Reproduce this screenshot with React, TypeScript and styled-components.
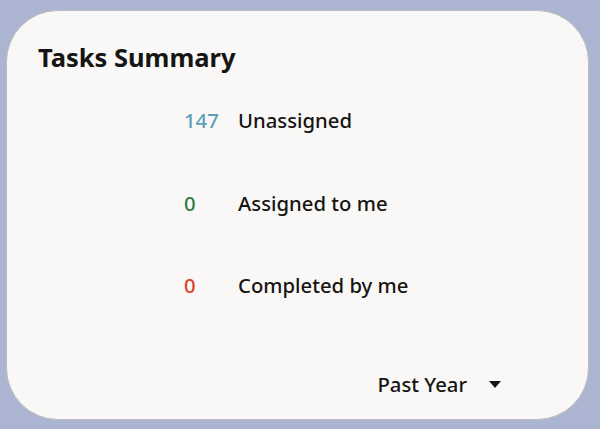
import React from 'react';
import styled, { createGlobalStyle } from 'styled-components';

const GlobalStyle = createGlobalStyle`
  html, body {
    margin: 0;
    padding: 0;
    background: #abb5d1;
    font-family: "Noto Sans", "Open Sans", sans-serif;
  }
`;

const Page = styled.div`
  width: 600px;
  height: 429px;
  padding: 10px 11px 9px 6px;
  box-sizing: border-box;
`;

const Card = styled.section`
  height: 100%;
  box-sizing: border-box;
  background: #f9f8f6;
  border: 1px solid #bdbdbd;
  border-radius: 52px;
  padding: 29px 32px 20px 31px;
  display: flex;
  flex-direction: column;
`;

const Title = styled.h2`
  margin: 0;
  font-size: 25.5px;
  font-weight: 700;
  color: #161513;
  line-height: 34px;
`;

const List = styled.div`
  display: grid;
  grid-template-columns: 54px auto;
  row-gap: 54.5px;
  margin: 32px 0 0 146px;
`;

const Count = styled.span<{ $color: string }>`
  font-size: 20.3px;
  line-height: 28px;
  font-weight: 500;
  color: ${p => p.$color};
`;

const Label = styled.span`
  font-size: 20.3px;
  line-height: 28px;
  font-weight: 500;
  color: #161513;
`;

const Footer = styled.div`
  margin-top: auto;
  display: flex;
  justify-content: flex-end;
  align-items: center;
  gap: 22px;
  padding-right: 55px;
  padding-bottom: 1px;
`;

const Range = styled.span`
  font-size: 20.3px;
  line-height: 28px;
  font-weight: 500;
  color: #161513;
`;

const Caret = styled.span`
  width: 0;
  height: 0;
  border-left: 6.5px solid transparent;
  border-right: 6.5px solid transparent;
  border-top: 7px solid #161513;
`;

const rows = [
  { count: 147, label: 'Unassigned', color: '#5f9fb9' },
  { count: 0, label: 'Assigned to me', color: '#2e7b48' },
  { count: 0, label: 'Completed by me', color: '#d6432f' },
];

export default function App() {
  return (
    <Page>
      <GlobalStyle />
      <Card>
        <Title>Tasks Summary</Title>
        <List>
          {rows.map(r => (
            <React.Fragment key={r.label}>
              <Count $color={r.color}>{r.count}</Count>
              <Label>{r.label}</Label>
            </React.Fragment>
          ))}
        </List>
        <Footer>
          <Range>Past Year</Range>
          <Caret />
        </Footer>
      </Card>
    </Page>
  );
}
